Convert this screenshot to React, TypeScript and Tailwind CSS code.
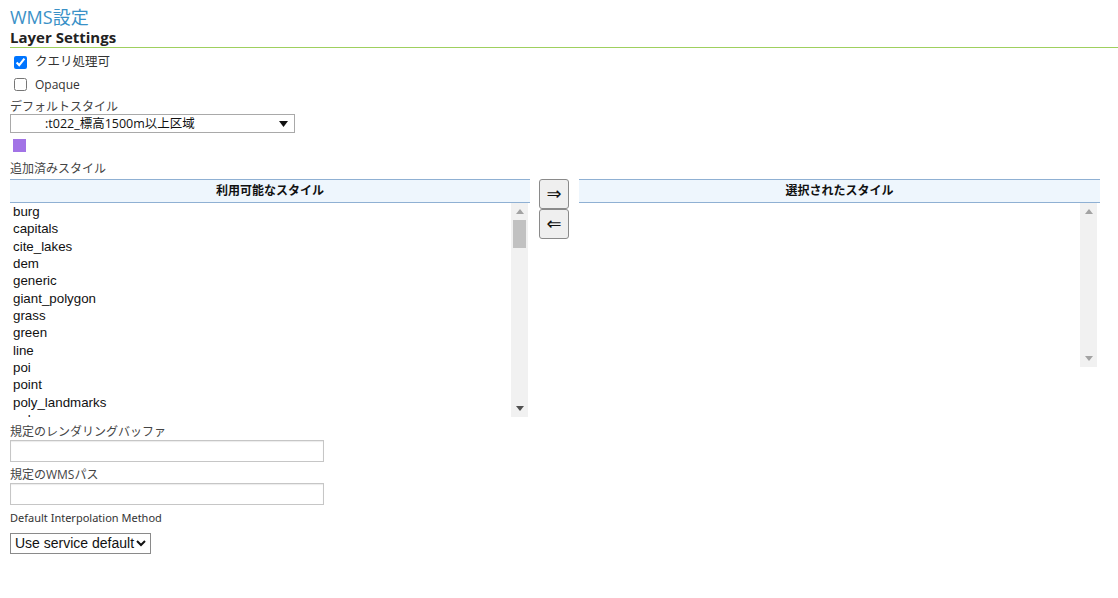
import React from "react";

const jp = "font-['Open_Sans','Noto_Sans_CJK_JP',sans-serif]";
const items = [
  "burg",
  "capitals",
  "cite_lakes",
  "dem",
  "generic",
  "giant_polygon",
  "grass",
  "green",
  "line",
  "poi",
  "point",
  "poly_landmarks",
  "polygon",
  "pophatch",
];

function Scrollbar({ thumb, downDark }: { thumb?: boolean; downDark?: boolean }) {
  return (
    <div className="flex w-[17px] shrink-0 flex-col bg-[#f1f1f1]">
      <div className="flex h-[17px] items-center justify-center">
        <svg width="8" height="5" viewBox="0 0 8 5">
          <polygon points="0,5 8,5 4,0" fill="#a3a3a3" />
        </svg>
      </div>
      <div className="flex-1 px-[2px]">
        {thumb && <div className="mt-0 h-[28px] w-full bg-[#c1c1c1]" />}
      </div>
      <div className="flex h-[17px] items-center justify-center">
        <svg width="8" height="5" viewBox="0 0 8 5">
          <polygon points="0,0 8,0 4,5" fill={downDark ? "#505050" : "#a3a3a3"} />
        </svg>
      </div>
    </div>
  );
}

export default function App() {
  return (
    <div className={`min-h-[598px] w-[1118px] bg-white text-[#333] ${jp}`}>
      <div className="pl-[10px] pt-[5px]">
        <div className="h-[24px] text-[18px] leading-[24px] text-[#3a91c7]">WMS設定</div>
        <div className="h-[18px] text-[15px] font-bold leading-[17px] text-[#222]">Layer Settings</div>
        <div className="h-[1px] w-full bg-[#9fd05e]" />

        <div className="mt-[6px] flex h-[17px] items-center">
          <input type="checkbox" defaultChecked className="m-0 ml-[4px] h-[13px] w-[13px] accent-[#0075ff]" />
          <span className="ml-[8px] text-[12.5px] text-[#333]">クエリ処理可</span>
        </div>
        <div className="mt-[5px] flex h-[17px] items-center">
          <input type="checkbox" className="m-0 ml-[4px] h-[13px] w-[13px]" />
          <span className="ml-[8px] text-[12px] text-[#333]">Opaque</span>
        </div>

        <div className="mt-[7px] h-[14px] text-[12px] leading-[14px] text-[#444]">デフォルトスタイル</div>
        <div className="mt-0 flex h-[19px] w-[285px] items-center border border-[#a9a9a9] bg-white">
          <span className="ml-[34px] flex-1 text-[12.5px] leading-[17px] text-[#111]">:t022_標高1500m以上区域</span>
          <svg width="9" height="6" viewBox="0 0 9 6" className="mr-[6px]">
            <polygon points="0,0 9,0 4.5,6" fill="#111" />
          </svg>
        </div>
        <div className="ml-[3px] mt-[6px] h-[13px] w-[13px] bg-[#a273e6]" />

        <div className="mt-[10px] h-[14px] text-[12px] leading-[14px] text-[#444]">追加済みスタイル</div>

        <div className="mt-[3px] flex items-start">
          <div className="w-[520px]">
            <div className="flex h-[24px] items-center justify-center border-y border-[#8fb0d3] bg-[#eef6fd] text-[12px] font-bold text-[#111]">
              利用可能なスタイル
            </div>
            <div className="flex h-[214px] w-[518px] overflow-hidden">
              <div className="flex-1 overflow-hidden pl-[3px] font-['Liberation_Sans',Arial,sans-serif] text-[13.33px] leading-[17.33px] text-[#111]">
                {items.map((it) => (
                  <div key={it} className="h-[17.33px]">
                    {it}
                  </div>
                ))}
              </div>
              <Scrollbar thumb downDark />
            </div>
          </div>

          <div className="ml-[9px] flex flex-col">
            <button className="flex h-[30px] w-[30px] items-center justify-center rounded-[3px] border border-[#8a8a8a] bg-[#efefef] font-['DejaVu_Sans',sans-serif] text-[18px] leading-none text-[#111]">
              ⇒
            </button>
            <button className="flex h-[30px] w-[30px] items-center justify-center rounded-[3px] border border-[#8a8a8a] bg-[#efefef] font-['DejaVu_Sans',sans-serif] text-[18px] leading-none text-[#111]">
              ⇐
            </button>
          </div>

          <div className="ml-[10px] w-[521px]">
            <div className="flex h-[24px] items-center justify-center border-y border-[#8fb0d3] bg-[#eef6fd] text-[12px] font-bold text-[#111]">
              選択されたスタイル
            </div>
            <div className="flex h-[164px] w-[518px]">
              <div className="flex-1" />
              <Scrollbar />
            </div>
          </div>
        </div>

        <div className="mt-[8px] h-[14px] text-[12px] leading-[14px] text-[#444]">規定のレンダリングバッファ</div>
        <div className="mt-[1px] h-[22px] w-[314px] border border-[#c6c6c6] shadow-[inset_0_1px_1px_rgba(0,0,0,0.08)]" />

        <div className="mt-[6px] h-[14px] text-[12px] leading-[14px] text-[#444]">規定のWMSパス</div>
        <div className="mt-[1px] h-[22px] w-[314px] border border-[#c6c6c6] shadow-[inset_0_1px_1px_rgba(0,0,0,0.08)]" />

        <div className="mt-[6px] h-[14px] font-['Noto_Sans',sans-serif] text-[11px] leading-[14px] text-[#333]">
          Default Interpolation Method
        </div>
        <div className="mt-[8px] flex h-[21px] w-[141px] items-center border border-[#8a8a8a] bg-white pl-[4px] font-['Liberation_Sans',Arial,sans-serif] text-[14px] text-[#111]">
          <span className="flex-1">Use service default</span>
          <svg width="10" height="7" viewBox="0 0 10 7" className="mr-[4px]">
            <polyline points="1,1 5,5 9,1" fill="none" stroke="#111" strokeWidth="2" />
          </svg>
        </div>
      </div>
    </div>
  );
}
